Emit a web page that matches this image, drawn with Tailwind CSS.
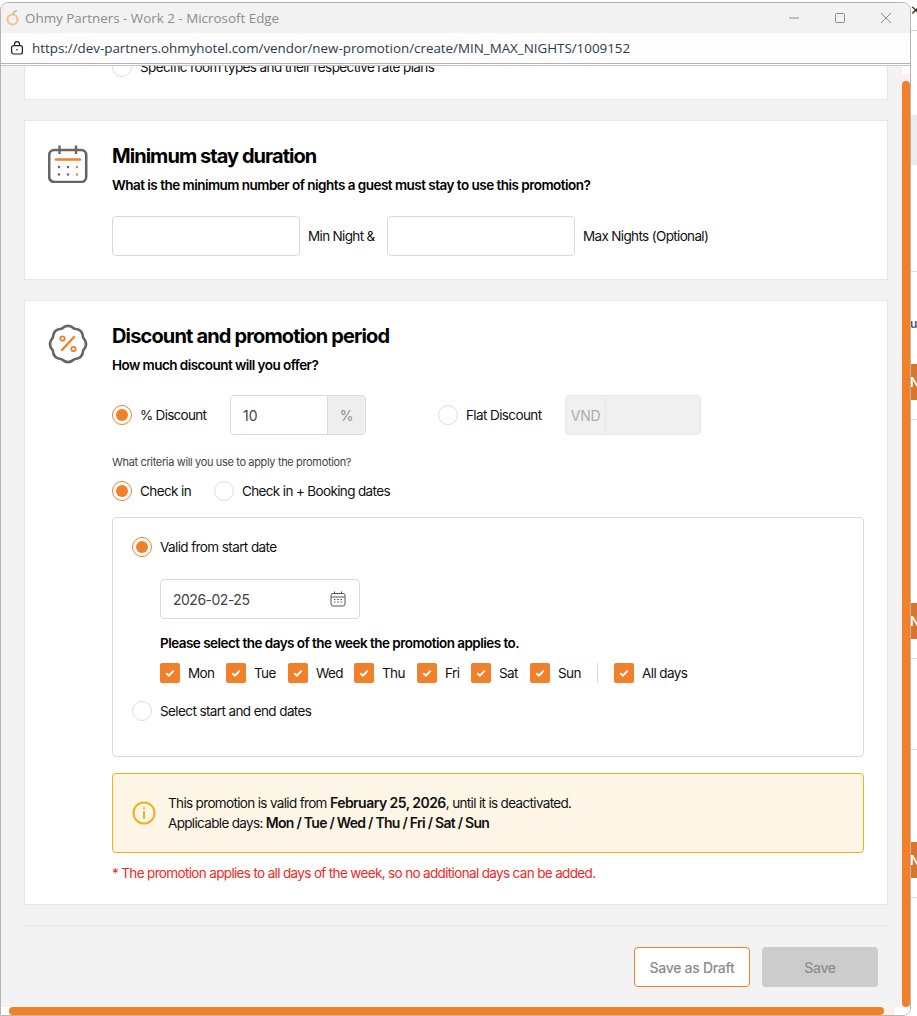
<!DOCTYPE html>
<html lang="en">
<head>
<meta charset="UTF-8">
<title>Ohmy Partners - Work 2 - Microsoft Edge</title>
<script src="https://cdn.jsdelivr.net/npm/@tailwindcss/browser@4"></script>
</head>
<body class="relative w-[917px] h-[1016px] overflow-hidden bg-white font-['Inter','Liberation_Sans',sans-serif] text-[13.5px] tracking-[-0.6px] text-[#111]">

  <!-- page behind the popup, only a sliver shows on the right -->
  <div class="absolute inset-y-0 right-0 w-[7px] flex flex-col text-white text-[13px] font-semibold leading-none tracking-normal">
    <div class="h-[31px] bg-white border-b border-[#ccc] text-[#333] text-[17px] font-normal pt-[1px]">×</div>
    <div class="h-[84px]"></div>
    <div class="h-[50px] bg-[#ececec]"></div>
    <div class="h-[107px] bg-white border-b border-[#ddd]"></div>
    <div class="h-[92px] bg-white text-[#555] text-[12px] pt-[46px]">u</div>
    <div class="h-[36px] bg-[#d9762b] pt-[12px]">N</div>
    <div class="h-[20px] border-b border-[#ddd]"></div>
    <div class="h-[183px]"></div>
    <div class="h-[36px] bg-[#d9762b] pt-[12px]">N</div>
    <div class="h-[20px] border-b border-[#ddd]"></div>
    <div class="h-[91px] border-b border-[#ddd]"></div>
    <div class="h-[92px]"></div>
    <div class="h-[36px] bg-[#d9762b] pt-[12px]">N</div>
    <div class="h-[20px] border-b border-[#ddd]"></div>
  </div>

  <!-- popup window -->
  <div class="absolute left-0 top-[2px] w-[911px] h-[1014px] flex flex-col overflow-hidden rounded-t-[8px] rounded-br-[8px] border border-[#b5b5b5] bg-[#f3f3f3]">
    <div class="h-[30px] shrink-0 flex items-center bg-[#f2f2f2] pl-[4px] font-['Open_Sans','Liberation_Sans',sans-serif] text-[13.4px] tracking-normal text-[#8c8c8c]">
      <svg class="w-[16px] h-[18px] mr-[4px]" viewBox="0 0 16 18" fill="none">
        <circle cx="7.5" cy="10.5" r="5" stroke="#f3c09a" stroke-width="2.2"/>
        <path d="M8 5 C8.5 3 10 2 11.5 2" stroke="#a8c690" stroke-width="1.6" stroke-linecap="round"/>
      </svg>
      <span>Ohmy Partners - Work 2 - Microsoft Edge</span>
      <div class="ml-auto flex items-center">
        <svg class="w-[46px] h-[16px]" viewBox="0 0 46 16" fill="none"><path d="M18 8 H28" stroke="#8c8c8c"/></svg>
        <svg class="w-[46px] h-[16px]" viewBox="0 0 46 16" fill="none"><rect x="18.5" y="3.5" width="9" height="9" rx="1" stroke="#8c8c8c"/></svg>
        <svg class="w-[46px] h-[16px] mr-[1px]" viewBox="0 0 46 16" fill="none"><path d="M18 3 L28 13 M28 3 L18 13" stroke="#8c8c8c"/></svg>
      </div>
    </div>
    <div class="h-[31px] shrink-0 flex items-center bg-[#fdfdfd] border-b border-[#b3b3b3] pl-[9px] font-['Open_Sans','Liberation_Sans',sans-serif] text-[13.37px] tracking-normal text-[#2b3a4a]">
      <svg class="w-[14px] h-[14px] mr-[8px]" viewBox="0 0 14 14" fill="none" stroke="#222" stroke-width="1.2">
        <rect x="1.6" y="4.6" width="10.8" height="8.4" rx="2"/>
        <path d="M4.5 4.5 V3.2 a2.5 2.5 0 0 1 5 0 V4.5"/>
        <circle cx="7" cy="8.8" r="0.8" fill="#222" stroke="none"/>
      </svg>
      <span>https://dev-partners.ohmyhotel.com/vendor/new-promotion/create/MIN_MAX_NIGHTS/1009152</span>
    </div>
    <div class="h-px shrink-0 bg-white"></div>

    <div class="relative flex-1 overflow-hidden pl-[23px] pr-[22px] border-t border-[#c4c4c4]">
      <!-- clipped card at top of scroll area -->
      <div class="h-[34px] overflow-hidden bg-white border border-t-0 border-[#e6e6e6] w-[864px] pl-[87px]">
        <div class="flex items-center gap-[8px] -mt-[9px]">
          <span class="w-[20px] h-[20px] rounded-full border border-[#ddd] bg-white shrink-0"></span>
          <span>Specific room types and their respective rate plans</span>
        </div>
      </div>

      <!-- minimum stay -->
      <section class="mt-[20px] w-[864px] h-[160px] bg-white border border-[#e6e6e6] flex pl-[23px] pt-[24px]">
        <svg class="w-[40px] h-[38px] shrink-0 mr-[24px]" viewBox="0 0 40 38" fill="none">
          <rect x="1.2" y="5" width="37" height="32" rx="5" stroke="#666" stroke-width="2.6"/>
          <path d="M11.5 0.5 V9 M28 0.5 V9" stroke="#666" stroke-width="2.4"/>
          <path d="M8 14.5 H32" stroke="#f1802a" stroke-width="2.4" stroke-linecap="round"/>
          <circle cx="11" cy="22" r="1.2" fill="#666"/><circle cx="20" cy="22" r="1.2" fill="#666"/><circle cx="29" cy="22" r="1.2" fill="#f1802a"/>
          <circle cx="11" cy="29.5" r="1.2" fill="#666"/><circle cx="20" cy="29.5" r="1.2" fill="#666"/><circle cx="29" cy="29.5" r="1.2" fill="#f1802a"/>
        </svg>
        <div class="flex flex-col">
          <h2 class="-mt-[1px] text-[20px] leading-[24px] font-bold text-black tracking-[-0.95px]">Minimum stay duration</h2>
          <p class="mt-[7px] leading-[20px] font-semibold text-black tracking-[-0.52px]">What is the minimum number of nights a guest must stay to use this promotion?</p>
          <div class="mt-[21px] flex items-center">
            <div class="w-[188px] h-[40px] rounded-[4px] border border-[#d9d9d9] bg-white"></div>
            <span class="ml-[8px] w-[79px] tracking-[-0.66px]">Min Night &amp;</span>
            <div class="w-[188px] h-[40px] rounded-[4px] border border-[#d9d9d9] bg-white"></div>
            <span class="ml-[8px] tracking-[-0.65px]">Max Nights (Optional)</span>
          </div>
        </div>
      </section>

      <!-- discount -->
      <section class="mt-[20px] w-[864px] h-[605px] bg-white border border-[#e6e6e6] flex pl-[23px] pt-[23px]">
        <svg class="w-[40px] h-[40px] shrink-0 mr-[24px]" viewBox="0 0 40 40" fill="none">
          <path d="M13.7 4.8 Q20 -1 26.3 4.8 Q34.8 5.2 35.2 13.7 Q41 20 35.2 26.3 Q34.8 34.8 26.3 35.2 Q20 41 13.7 35.2 Q5.2 34.8 4.8 26.3 Q-1 20 4.8 13.7 Q5.2 5.2 13.7 4.8 Z" stroke="#666" stroke-width="2.6" stroke-linejoin="round"/>
          <path d="M14 26 L26 13" stroke="#f1802a" stroke-width="2.4" stroke-linecap="round"/>
          <circle cx="14.5" cy="14.5" r="2.2" stroke="#f1802a" stroke-width="1.8"/>
          <circle cx="25.5" cy="25" r="2.2" stroke="#f1802a" stroke-width="1.8"/>
        </svg>
        <div class="flex flex-col w-[752px]">
          <h2 class="text-[20px] leading-[24px] font-bold text-black tracking-[-0.85px]">Discount and promotion period</h2>
          <p class="mt-[7px] leading-[20px] font-semibold text-black tracking-[-0.55px]">How much discount will you offer?</p>

          <div class="mt-[20px] h-[40px] flex items-center">
            <span class="w-[20px] h-[20px] rounded-full border border-[#f1802a] bg-white flex items-center justify-center shrink-0"><span class="w-[12px] h-[12px] rounded-full bg-[#f1802a]"></span></span>
            <span class="ml-[8px] w-[90px] tracking-[-0.72px]">% Discount</span>
            <div class="w-[136px] h-[40px] flex rounded-[4px] border border-[#d9d9d9] overflow-hidden text-[14px] tracking-normal">
              <span class="flex-1 bg-white pl-[12px] flex items-center text-[#444]">10</span>
              <span class="w-[38px] bg-[#eeeeee] border-l border-[#d9d9d9] flex items-center justify-center text-[#8c8c8c]">%</span>
            </div>
            <span class="ml-[72px] w-[20px] h-[20px] rounded-full border border-[#ddd] bg-white shrink-0"></span>
            <span class="ml-[8px] w-[99px]">Flat Discount</span>
            <div class="w-[136px] h-[40px] flex rounded-[4px] border border-[#e6e6e6] bg-[#f0f0f0] overflow-hidden">
              <span class="w-[40px] border-r border-[#e6e6e6] flex items-center justify-center text-[14px] text-[#adadad] tracking-[-0.3px]">VND</span>
            </div>
          </div>

          <p class="mt-[20px] h-[14px] text-[11px] leading-[14px] text-[#444] tracking-[-0.35px]">What criteria will you use to apply the promotion?</p>
          <div class="mt-[12px] h-[20px] flex items-center">
            <span class="w-[20px] h-[20px] rounded-full border border-[#f1802a] bg-white flex items-center justify-center shrink-0"><span class="w-[12px] h-[12px] rounded-full bg-[#f1802a]"></span></span>
            <span class="ml-[8px] w-[74px]">Check in</span>
            <span class="w-[20px] h-[20px] rounded-full border border-[#ddd] bg-white shrink-0"></span>
            <span class="ml-[8px] tracking-[-0.64px]">Check in + Booking dates</span>
          </div>

          <div class="mt-[16px] w-[752px] h-[240px] rounded-[4px] border border-[#d9d9d9] pl-[19px] pt-[19px]">
            <div class="h-[20px] flex items-center">
              <span class="w-[20px] h-[20px] rounded-full border border-[#f1802a] bg-white flex items-center justify-center shrink-0"><span class="w-[12px] h-[12px] rounded-full bg-[#f1802a]"></span></span>
              <span class="ml-[8px]">Valid from start date</span>
            </div>
            <div class="mt-[22px] ml-[28px] w-[200px] h-[40px] rounded-[4px] border border-[#d9d9d9] flex items-center justify-between pl-[12px] pr-[13px] text-[14px] tracking-[-0.5px] text-[#444]">
              <span>2026-02-25</span>
              <svg class="w-[16px] h-[16px]" viewBox="0 0 16 16" fill="none" stroke="#555">
                <rect x="1" y="2.5" width="14" height="12.5" rx="2"/>
                <path d="M1 6 H15 M4.5 0.5 V3 M11.5 0.5 V3"/>
                <path d="M4 8.5 H5.5 M7.2 8.5 H8.8 M10.5 8.5 H12 M4 11 H5.5 M7.2 11 H8.8 M10.5 11 H12" stroke-width="1.2"/>
              </svg>
            </div>
            <p class="mt-[14px] ml-[28px] h-[20px] leading-[20px] font-semibold text-black tracking-[-0.53px]">Please select the days of the week the promotion applies to.</p>
            <div class="mt-[10px] ml-[28px] h-[20px] flex items-center">
              <span class="w-[20px] h-[20px] rounded-[2px] bg-[#f1802a] flex items-center justify-center shrink-0"><svg class="w-[12px] h-[12px]" viewBox="0 0 12 12" fill="none" stroke="#fff" stroke-width="2"><path d="M2.3 6.3 L4.9 8.7 L9.7 3.6"/></svg></span>
              <span class="ml-[8px] w-[38px]">Mon</span>
              <span class="w-[20px] h-[20px] rounded-[2px] bg-[#f1802a] flex items-center justify-center shrink-0"><svg class="w-[12px] h-[12px]" viewBox="0 0 12 12" fill="none" stroke="#fff" stroke-width="2"><path d="M2.3 6.3 L4.9 8.7 L9.7 3.6"/></svg></span>
              <span class="ml-[8px] w-[34px]">Tue</span>
              <span class="w-[20px] h-[20px] rounded-[2px] bg-[#f1802a] flex items-center justify-center shrink-0"><svg class="w-[12px] h-[12px]" viewBox="0 0 12 12" fill="none" stroke="#fff" stroke-width="2"><path d="M2.3 6.3 L4.9 8.7 L9.7 3.6"/></svg></span>
              <span class="ml-[8px] w-[38px]">Wed</span>
              <span class="w-[20px] h-[20px] rounded-[2px] bg-[#f1802a] flex items-center justify-center shrink-0"><svg class="w-[12px] h-[12px]" viewBox="0 0 12 12" fill="none" stroke="#fff" stroke-width="2"><path d="M2.3 6.3 L4.9 8.7 L9.7 3.6"/></svg></span>
              <span class="ml-[8px] w-[35px]">Thu</span>
              <span class="w-[20px] h-[20px] rounded-[2px] bg-[#f1802a] flex items-center justify-center shrink-0"><svg class="w-[12px] h-[12px]" viewBox="0 0 12 12" fill="none" stroke="#fff" stroke-width="2"><path d="M2.3 6.3 L4.9 8.7 L9.7 3.6"/></svg></span>
              <span class="ml-[8px] w-[26px]">Fri</span>
              <span class="w-[20px] h-[20px] rounded-[2px] bg-[#f1802a] flex items-center justify-center shrink-0"><svg class="w-[12px] h-[12px]" viewBox="0 0 12 12" fill="none" stroke="#fff" stroke-width="2"><path d="M2.3 6.3 L4.9 8.7 L9.7 3.6"/></svg></span>
              <span class="ml-[8px] w-[31px]">Sat</span>
              <span class="w-[20px] h-[20px] rounded-[2px] bg-[#f1802a] flex items-center justify-center shrink-0"><svg class="w-[12px] h-[12px]" viewBox="0 0 12 12" fill="none" stroke="#fff" stroke-width="2"><path d="M2.3 6.3 L4.9 8.7 L9.7 3.6"/></svg></span>
              <span class="ml-[8px] w-[39px]">Sun</span>
              <span class="w-px h-[20px] bg-[#d9d9d9] mr-[16px]"></span>
              <span class="w-[20px] h-[20px] rounded-[2px] bg-[#f1802a] flex items-center justify-center shrink-0"><svg class="w-[12px] h-[12px]" viewBox="0 0 12 12" fill="none" stroke="#fff" stroke-width="2"><path d="M2.3 6.3 L4.9 8.7 L9.7 3.6"/></svg></span>
              <span class="ml-[8px]">All days</span>
            </div>
            <div class="mt-[18px] h-[20px] flex items-center">
              <span class="w-[20px] h-[20px] rounded-full border border-[#ddd] bg-white shrink-0"></span>
              <span class="ml-[8px]">Select start and end dates</span>
            </div>
          </div>

          <div class="mt-[16px] w-[752px] h-[80px] rounded-[4px] border border-[#f2b01e] bg-[#fdf6e6] flex items-center pl-[19px]">
            <svg class="w-[24px] h-[24px] shrink-0 mr-[12px]" viewBox="0 0 24 24" fill="none" stroke="#f2b01e" stroke-width="2">
              <circle cx="12" cy="12" r="10.5"/>
              <path d="M12 11 V17" stroke-linecap="round"/>
              <path d="M12 7 V7.5" stroke-linecap="round"/>
            </svg>
            <div class="leading-[20px] tracking-[-0.66px]">
              <p>This promotion is valid from <b class="font-semibold text-[14px] tracking-[-0.54px]">February 25, 2026</b>, until it is deactivated.</p>
              <p>Applicable days: <b class="font-semibold text-[14px] tracking-[-0.73px]">Mon / Tue / Wed / Thu / Fri / Sat / Sun</b></p>
            </div>
          </div>

          <p class="mt-[10px] leading-[20px] text-[#f5281e] tracking-[-0.65px]">* The promotion applies to all days of the week, so no additional days can be added.</p>
        </div>
      </section>

      <!-- footer actions -->
      <div class="mt-[20px] w-[864px] border-t-2 border-[#ececec] flex justify-end gap-[12px] pt-[20px] pr-[10px] text-[14px] tracking-[-0.3px]">
        <button class="w-[116px] h-[40px] rounded-[4px] border border-[#f1802a] bg-white text-[#8c8c8c] font-medium">Save as Draft</button>
        <button class="w-[116px] h-[40px] rounded-[4px] bg-[#cccccc] text-[#8c8c8c] font-medium">Save</button>
      </div>

      <!-- scrollbars -->
      <div class="absolute right-0 top-0 bottom-0 w-[8px] bg-white flex flex-col pt-[8px] pb-[8px]">
        <div class="flex-1 bg-[#fdf0e6] pt-[7px]">
          <div class="h-full rounded-full bg-[#f1802a]"></div>
        </div>
      </div>
      <div class="absolute left-0 right-0 bottom-0 h-[8px] bg-white pl-[8px] pr-[16px]">
        <div class="h-full bg-[#fdf0e6] pr-[10px]">
          <div class="h-full rounded-full bg-[#f1802a]"></div>
        </div>
      </div>
    </div>
  </div>
</body>
</html>
